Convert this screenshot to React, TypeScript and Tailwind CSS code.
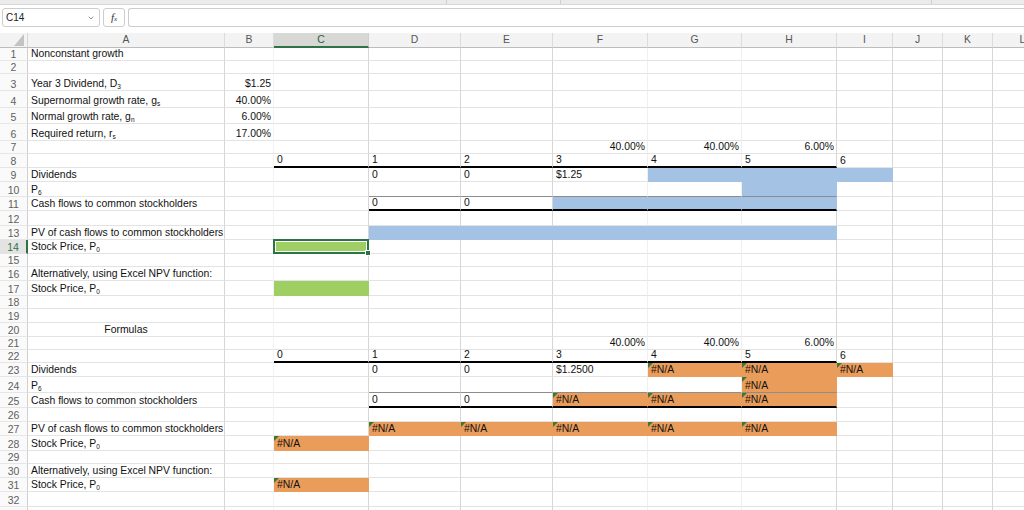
import React from 'react';
import { ChevronDown } from 'lucide-react';

type Al = 'r' | 'c';
type Bg = 'b' | 'g' | 'o';
type Cell = { t?: React.ReactNode; al?: Al; bg?: Bg; err?: boolean; bot?: 'thick' | 'dark'; sel?: boolean };
type Col = { k: string; w: string; br: string };

const FILL: Record<Bg, string> = {
  b: 'bg-[#a4c2e4] border-r-[#a4c2e4]',
  g: 'bg-[#9fce63] border-r-[#9fce63]',
  o: 'bg-[#ea9c5a] border-r-[#ea9c5a]',
};
const FILLB: Record<Bg, string> = {
  b: 'border-b-[#a4c2e4]',
  g: 'border-b-[#9fce63]',
  o: 'border-b-[#ea9c5a]',
};

const COLS: Col[] = [
  { k: 'A', w: 'w-[197px]', br: 'border-r-[#d6d6d6]' },
  { k: 'B', w: 'w-[49px]', br: 'border-r-[#f3f3f3]' },
  { k: 'C', w: 'w-[95px]', br: 'border-r-[#d6d6d6]' },
  { k: 'D', w: 'w-[92px]', br: 'border-r-[#d6d6d6]' },
  { k: 'E', w: 'w-[92px]', br: 'border-r-[#d6d6d6]' },
  { k: 'F', w: 'w-[95px]', br: 'border-r-[#efefef]' },
  { k: 'G', w: 'w-[94px]', br: 'border-r-[#efefef]' },
  { k: 'H', w: 'w-[95px]', br: 'border-r-[#d6d6d6]' },
  { k: 'I', w: 'w-[56px]', br: 'border-r-[#d6d6d6]' },
  { k: 'J', w: 'w-[50px]', br: 'border-r-[#d6d6d6]' },
  { k: 'K', w: 'w-[50px]', br: 'border-r-[#d6d6d6]' },
  { k: 'L', w: 'w-[60px]', br: 'border-r-[#d6d6d6]' },
];

const Sub = ({ children }: { children: React.ReactNode }) => (
  <sub className="text-[6.5px]">{children}</sub>
);

const NA = '#N/A';
const rates: Record<string, Cell> = {
  F: { t: '40.00%', al: 'r' },
  G: { t: '40.00%', al: 'r' },
  H: { t: '6.00%', al: 'r' },
};
const periods: Record<string, Cell> = {
  C: { t: '0', bot: 'thick' },
  D: { t: '1', bot: 'thick' },
  E: { t: '2', bot: 'thick' },
  F: { t: '3', bot: 'thick' },
  G: { t: '4', bot: 'thick' },
  H: { t: '5', bot: 'thick' },
  I: { t: '6' },
};
const cashLabel = 'Cash flows to common stockholders';
const pvLabel = 'PV of cash flows to common stockholders';
const altLabel = 'Alternatively, using Excel NPV function:';
const price = (
  <>
    Stock Price, P<Sub>0</Sub>
  </>
);
const p6 = (
  <>
    P<Sub>6</Sub>
  </>
);

const ROWS: { h: string; c: Record<string, Cell> }[] = [
  { h: 'h-[13px]', c: { A: { t: 'Nonconstant growth' } } },
  { h: 'h-[13px]', c: {} },
  { h: 'h-[17px]', c: { A: { t: <>Year 3 Dividend, D<Sub>3</Sub></> }, B: { t: '$1.25', al: 'r' } } },
  { h: 'h-[17px]', c: { A: { t: <>Supernormal growth rate, g<Sub>s</Sub></> }, B: { t: '40.00%', al: 'r' } } },
  { h: 'h-[16px]', c: { A: { t: <>Normal growth rate, g<Sub>n</Sub></> }, B: { t: '6.00%', al: 'r' } } },
  { h: 'h-[17px]', c: { A: { t: <>Required return, r<Sub>s</Sub></> }, B: { t: '17.00%', al: 'r' } } },
  { h: 'h-[13px]', c: rates },
  { h: 'h-[14px]', c: periods },
  {
    h: 'h-[14px]',
    c: { A: { t: 'Dividends' }, D: { t: '0' }, E: { t: '0' }, F: { t: '$1.25' }, G: { bg: 'b' }, H: { bg: 'b' }, I: { bg: 'b' } },
  },
  {
    h: 'h-[15px]',
    c: { A: { t: p6 }, D: { bot: 'dark' }, E: { bot: 'dark' }, F: { bot: 'dark' }, G: { bot: 'dark' }, H: { bg: 'b', bot: 'dark' } },
  },
  {
    h: 'h-[14px]',
    c: {
      A: { t: cashLabel },
      D: { t: '0', bot: 'thick' },
      E: { t: '0', bot: 'thick' },
      F: { bg: 'b', bot: 'thick' },
      G: { bg: 'b', bot: 'thick' },
      H: { bg: 'b', bot: 'thick' },
    },
  },
  { h: 'h-[15px]', c: {} },
  { h: 'h-[14px]', c: { A: { t: pvLabel }, D: { bg: 'b' }, E: { bg: 'b' }, F: { bg: 'b' }, G: { bg: 'b' }, H: { bg: 'b' } } },
  { h: 'h-[14px]', c: { A: { t: price }, C: { bg: 'g', sel: true } } },
  { h: 'h-[13px]', c: {} },
  { h: 'h-[14px]', c: { A: { t: altLabel } } },
  { h: 'h-[15px]', c: { A: { t: price }, C: { bg: 'g' } } },
  { h: 'h-[13px]', c: {} },
  { h: 'h-[14px]', c: {} },
  { h: 'h-[14px]', c: { A: { t: 'Formulas', al: 'c' } } },
  { h: 'h-[13px]', c: rates },
  { h: 'h-[13px]', c: periods },
  {
    h: 'h-[14px]',
    c: {
      A: { t: 'Dividends' },
      D: { t: '0' },
      E: { t: '0' },
      F: { t: '$1.2500' },
      G: { t: NA, bg: 'o', err: true },
      H: { t: NA, bg: 'o', err: true },
      I: { t: NA, bg: 'o', err: true },
    },
  },
  {
    h: 'h-[16px]',
    c: {
      A: { t: p6 },
      D: { bot: 'dark' },
      E: { bot: 'dark' },
      F: { bot: 'dark' },
      G: { bot: 'dark' },
      H: { t: NA, bg: 'o', err: true, bot: 'dark' },
    },
  },
  {
    h: 'h-[15px]',
    c: {
      A: { t: cashLabel },
      D: { t: '0', bot: 'thick' },
      E: { t: '0', bot: 'thick' },
      F: { t: NA, bg: 'o', err: true, bot: 'thick' },
      G: { t: NA, bg: 'o', err: true, bot: 'thick' },
      H: { t: NA, bg: 'o', err: true, bot: 'thick' },
    },
  },
  { h: 'h-[14px]', c: {} },
  {
    h: 'h-[14px]',
    c: {
      A: { t: pvLabel },
      D: { t: NA, bg: 'o', err: true },
      E: { t: NA, bg: 'o', err: true },
      F: { t: NA, bg: 'o', err: true },
      G: { t: NA, bg: 'o', err: true },
      H: { t: NA, bg: 'o', err: true },
    },
  },
  { h: 'h-[15px]', c: { A: { t: price }, C: { t: NA, bg: 'o', err: true } } },
  { h: 'h-[13px]', c: {} },
  { h: 'h-[14px]', c: { A: { t: altLabel } } },
  { h: 'h-[14px]', c: { A: { t: price }, C: { t: NA, bg: 'o', err: true } } },
  { h: 'h-[15px]', c: {} },
  { h: 'h-[15px]', c: {} },
];

function CellBox({ c, col }: { c?: Cell; col: Col }) {
  const cls = [
    col.w,
    'shrink-0 relative flex items-end whitespace-nowrap border-r border-b leading-[12px]',
    c?.bg ? FILL[c.bg] : col.br,
    c?.bot === 'thick'
      ? 'border-b-2 border-b-black'
      : c?.bot === 'dark'
        ? 'border-b-[#8d8d8d]'
        : c?.bg
          ? FILLB[c.bg]
          : 'border-b-[#e3e3e3]',
    c?.al === 'r' ? 'justify-end pr-[2px]' : c?.al === 'c' ? 'justify-center' : 'pl-[3px]',
  ].join(' ');
  return (
    <div className={cls}>
      {c?.err && (
        <span className="absolute left-0 top-0 w-0 h-0 border-t-[5px] border-r-[5px] border-t-[#3a7834] border-r-transparent" />
      )}
      {c?.t !== undefined && <span>{c.t}</span>}
      {c?.sel && (
        <>
          <span className="absolute -left-px -top-px -right-px -bottom-px z-10 border-2 border-[#2c7446] shadow-[inset_0_0_0_1px_#ffffff]" />
          <span className="absolute -right-[3px] -bottom-[3px] z-10 w-[6px] h-[6px] bg-[#2c7446] border border-white" />
        </>
      )}
    </div>
  );
}

export default function App() {
  return (
    <div className="w-[1024px] h-[510px] overflow-hidden bg-white text-[#111] text-[10.4px] font-['Liberation_Sans',Arial,sans-serif]">
      {/* top strip */}
      <div className="h-[5px] bg-[#ebebeb] border-b border-b-[#d8d8d8] flex">
        <div className="w-[447px] border-r border-r-[#d0d0d0]" />
        <div className="w-[114px] border-r border-r-[#d0d0d0]" />
        <div className="w-[371px] border-r border-r-[#d0d0d0]" />
      </div>
      {/* formula bar */}
      <div className="h-[28px] flex items-start pt-[3px] pl-[2px] gap-[3px] bg-white">
        <div className="w-[98px] h-[19px] border border-[#cdcdcd] rounded-[3px] flex items-center justify-between pl-[3px] pr-[4px]">
          <span className="text-[10px] text-[#222]">C14</span>
          <ChevronDown size={8} strokeWidth={2.2} className="text-[#666]" />
        </div>
        <div className="w-[22px] h-[19px] border border-[#cdcdcd] rounded-[3px] flex items-center justify-center font-['Liberation_Serif',serif] italic text-[11px] text-[#333]">
          <span>
            f<span className="text-[7px]">x</span>
          </span>
        </div>
        <div className="flex-1 h-[19px] border border-[#cdcdcd] rounded-l-[3px] border-r-0" />
      </div>
      {/* column headers */}
      <div className="flex h-[15px] bg-[#f3f3f3] text-[#555] text-[10.4px]">
        <div className="w-[28px] shrink-0 border-r border-r-[#d6d6d6] border-b border-b-[#bdbdbd] flex items-end justify-end pr-[3px] pb-[1px]">
          <svg width="10" height="12" viewBox="0 0 10 12">
            <polygon points="10,0 10,12 0,12" fill="#c3c3c3" />
          </svg>
        </div>
        {COLS.map((col) =>
          col.k === 'C' ? (
            <div
              key={col.k}
              className={`${col.w} shrink-0 flex items-center justify-center bg-[#d8d8d6] text-[#2b5e3d] border-r border-r-[#d0d0d0] border-b-2 border-b-[#2c7446]`}
            >
              {col.k}
            </div>
          ) : (
            <div
              key={col.k}
              className={`${col.w} shrink-0 flex items-center justify-center border-r border-r-[#dcdcdc] border-b border-b-[#bdbdbd]`}
            >
              {col.k}
            </div>
          ),
        )}
      </div>
      {/* rows */}
      {ROWS.map((row, i) => {
        const n = i + 1;
        const active = n === 14;
        return (
          <div key={n} className={`flex ${row.h}`}>
            <div
              className={
                active
                  ? 'w-[28px] shrink-0 flex items-end justify-center leading-[12px] text-[10.5px] bg-[#e3e3e3] text-[#2c7446] border-r-2 border-r-[#2c7446] border-b border-b-[#e3e3e3]'
                  : 'w-[28px] shrink-0 flex items-end justify-center leading-[12px] text-[10.5px] bg-[#fafafa] text-[#606060] border-r border-r-[#d0d0d0] border-b border-b-[#e6e6e6]'
              }
            >
              {n}
            </div>
            {COLS.map((col) => (
              <CellBox key={col.k} c={row.c[col.k]} col={col} />
            ))}
          </div>
        );
      })}
    </div>
  );
}
